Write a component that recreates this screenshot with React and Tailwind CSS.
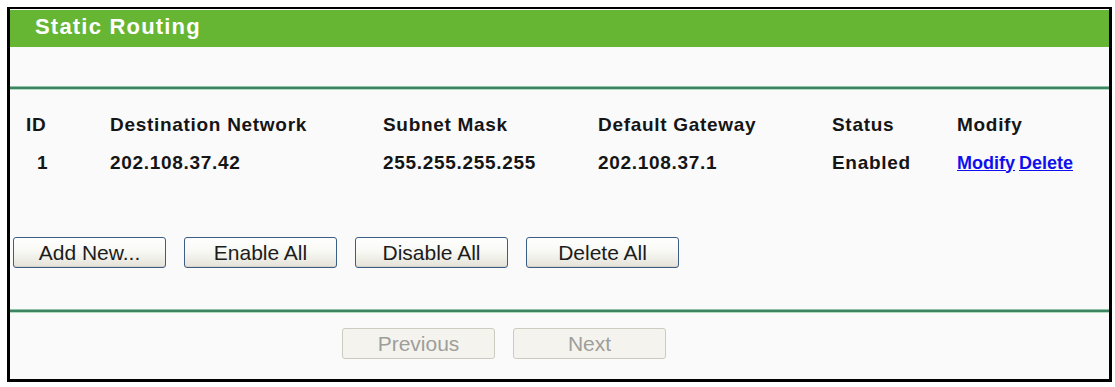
import React from "react";

const cols = "grid grid-cols-[84px_273px_215px_234px_125px_1fr]";

function Btn({ children }) {
  return (
    <button className="w-[153px] h-[31px] rounded-[3px] border border-[#3c5d86] bg-gradient-to-b from-white via-[#f7f7f3] to-[#e4e2d8] text-[21px] leading-none text-[#1c1c1c] shadow-[inset_0_-1px_0_#d6d3c6]">
      {children}
    </button>
  );
}

function DisBtn({ children }) {
  return (
    <button disabled className="w-[153px] h-[31px] rounded-[3px] border border-[#cdcbbf] bg-[#f4f3ed] text-[21px] leading-none text-[#9e9e9b]">
      {children}
    </button>
  );
}

function Rule() {
  return (
    <div className="flex flex-col">
      <div className="h-[1px] bg-[#8fc4a4]" />
      <div className="h-[2px] bg-[#3f8462]" />
      <div className="h-[1px] bg-[#b3dbc2]" />
    </div>
  );
}

export default function App() {
  return (
    <div className="w-[1115px] h-[387px] bg-white pt-[7px] pl-[7px]" style={{ fontFamily: '"Liberation Sans", Arial, sans-serif' }}>
      <div className="w-[1105px] h-[375px] border-[3px] border-t-2 border-black bg-[#fafafa] flex flex-col">
        <div className="mt-[1px] h-[37px] bg-[#66b633] flex items-center pl-[25px]">
          <span className="text-white font-bold text-[22px] tracking-[1.2px] leading-none -mt-[4px]">Static Routing</span>
        </div>
        <div className="h-[39px]" />
        <Rule />
        <div className={`${cols} h-[38px] mt-[16px] items-center text-[19px] font-bold tracking-[0.7px] text-[#151515] pl-[16px]`}>
          <span>ID</span>
          <span>Destination Network</span>
          <span>Subnet Mask</span>
          <span>Default Gateway</span>
          <span>Status</span>
          <span>Modify</span>
        </div>
        <div className={`${cols} h-[38px] items-center text-[19px] font-bold tracking-[0.7px] text-[#151515] pl-[16px]`}>
          <span className="pl-[11px]">1</span>
          <span>202.108.37.42</span>
          <span>255.255.255.255</span>
          <span>202.108.37.1</span>
          <span>Enabled</span>
          <span className="flex gap-[4px] text-[18px] tracking-normal text-[#1010ee]">
            <a href="#" className="underline">Modify</a>
            <a href="#" className="underline">Delete</a>
          </span>
        </div>
        <div className="flex gap-[18px] pl-[3px] mt-[55px]">
          <Btn>Add New...</Btn>
          <Btn>Enable All</Btn>
          <Btn>Disable All</Btn>
          <Btn>Delete All</Btn>
        </div>
        <div className="h-[41px]" />
        <Rule />
        <div className="flex gap-[18px] pl-[332px] mt-[15px]">
          <DisBtn>Previous</DisBtn>
          <DisBtn>Next</DisBtn>
        </div>
      </div>
    </div>
  );
}
